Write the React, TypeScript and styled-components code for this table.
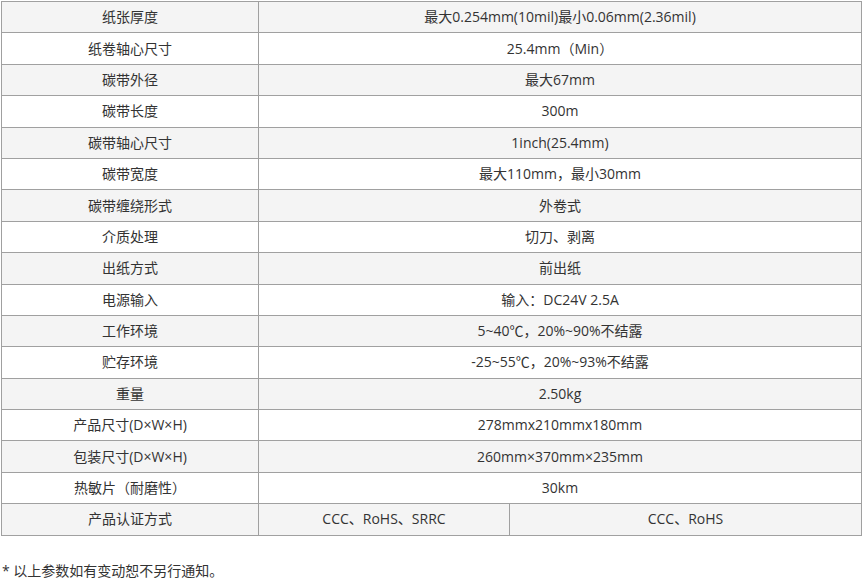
import React from "react";
import styled, { createGlobalStyle } from "styled-components";

const Global = createGlobalStyle`
  html, body { margin: 0; padding: 0; background: #fff; }
  body { font-family: "Open Sans", "Noto Sans CJK SC", sans-serif; color: #333; }
`;

const Page = styled.div`
  padding: 1px 0 0 1px;
  width: 860px;
`;

const Table = styled.table`
  width: 860px;
  border-collapse: collapse;
  table-layout: fixed;
  font-size: 14px;
  color: #333;
`;

const Row = styled.tr<{ $shade: boolean }>`
  background: ${(p) => (p.$shade ? "#f4f4f4" : "#ffffff")};
`;

const Cell = styled.td`
  border: 1px solid #a0a0a0;
  height: 30.4px;
  padding: 0 4px;
  text-align: center;
  vertical-align: middle;
  line-height: 20px;
  white-space: nowrap;
`;

const Note = styled.p`
  margin: 25px 0 0 1px;
  font-size: 14px;
  line-height: 20px;
  color: #333;
`;

const rows: [string, string][] = [
  ["纸张厚度", "最大0.254mm(10mil)最小0.06mm(2.36mil)"],
  ["纸卷轴心尺寸", "25.4mm（Min）"],
  ["碳带外径", "最大67mm"],
  ["碳带长度", "300m"],
  ["碳带轴心尺寸", "1inch(25.4mm)"],
  ["碳带宽度", "最大110mm，最小30mm"],
  ["碳带缠绕形式", "外卷式"],
  ["介质处理", "切刀、剥离"],
  ["出纸方式", "前出纸"],
  ["电源输入", "输入：DC24V 2.5A"],
  ["工作环境", "5~40℃，20%~90%不结露"],
  ["贮存环境", "-25~55℃，20%~93%不结露"],
  ["重量", "2.50kg"],
  ["产品尺寸(D×W×H)", "278mmx210mmx180mm"],
  ["包装尺寸(D×W×H)", "260mm×370mm×235mm"],
  ["热敏片（耐磨性）", "30km"],
];

export default function App() {
  return (
    <Page>
      <Global />
      <Table>
        <colgroup>
          <col style={{ width: 257 }} />
          <col style={{ width: 251 }} />
          <col style={{ width: 352 }} />
        </colgroup>
        <tbody>
          {rows.map(([k, v], i) => (
            <Row key={k} $shade={i % 2 === 0}>
              <Cell>{k}</Cell>
              <Cell colSpan={2}>{v}</Cell>
            </Row>
          ))}
          <Row $shade={true}>
            <Cell>产品认证方式</Cell>
            <Cell>CCC、RoHS、SRRC</Cell>
            <Cell>CCC、RoHS</Cell>
          </Row>
        </tbody>
      </Table>
      <Note>* 以上参数如有变动恕不另行通知。</Note>
    </Page>
  );
}
